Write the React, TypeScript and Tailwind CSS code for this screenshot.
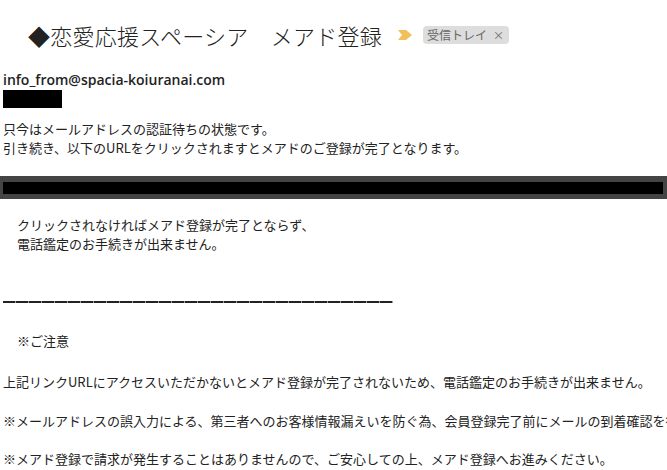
import * as React from "react";

// ─── Bits ──────────────────────────────────────────────────────────────────────

const JP = "font-['Noto_Sans_CJK_JP','Noto_Sans',sans-serif]";

function ImportantMarker() {
  return (
    <svg width="14" height="10" viewBox="0 0 14 10" className="shrink-0">
      <polygon points="0,0 8,0 14,5 8,10 0,10 4,5" fill="#f2c05a" />
    </svg>
  );
}

function InboxLabel() {
  return (
    <span
      className={`inline-flex h-[18px] items-center gap-[6px] rounded-[4px] bg-[#dddddd] pl-[4px] pr-[5px] text-[12px] leading-none text-[#666666] ${JP}`}
    >
      受信トレイ
      <span className="text-[11px] text-[#666666]">×</span>
    </span>
  );
}

function DashRule() {
  return (
    <div className="ml-[3px] h-[2px] w-[390px] bg-[repeating-linear-gradient(90deg,#222_0px,#222_12px,#9a9a9a_12px,#9a9a9a_13px)]" />
  );
}

// ─── App ───────────────────────────────────────────────────────────────────────

export default function App() {
  return (
    <div className="h-[470px] w-[667px] overflow-hidden whitespace-nowrap bg-white text-[#222222]">
      {/* Subject line */}
      <div className="flex h-[70px] items-center pl-[28px]">
        <h1 className={`text-[22px] font-light leading-none tracking-[0.25px] text-[#222222] ${JP}`}>
          ◆恋愛応援スペーシア　メアド登録
        </h1>
        <span className="ml-[16px] mr-[11px] flex">
          <ImportantMarker />
        </span>
        <InboxLabel />
      </div>

      {/* Sender */}
      <div className="pl-[3px] font-['Open_Sans','Roboto',sans-serif] text-[14px] font-semibold leading-[20px] text-[#222222]">
        info_from@spacia-koiuranai.com
      </div>
      <div className="ml-[3px] h-[18px] w-[59px] bg-black" />

      {/* Body */}
      <div className={`mt-[11px] pl-[3px] text-[13px] leading-[19px] ${JP}`}>
        <p>只今はメールアドレスの認証待ちの状態です。</p>
        <p>引き続き、以下のURLをクリックされますとメアドのご登録が完了となります。</p>
      </div>

      <div className="mt-[19px] flex h-[23px] items-center bg-[#444444] pl-[3px] pr-[4px]">
        <div className="h-[12px] flex-1 bg-black" />
      </div>

      <div className={`mt-[16px] pl-[17px] text-[13px] leading-[19px] ${JP}`}>
        <p>クリックされなければメアド登録が完了とならず、</p>
        <p>電話鑑定のお手続きが出来ません。</p>
      </div>

      <div className="mt-[48px]">
        <DashRule />
      </div>

      <div className={`text-[13px] leading-[19px] ${JP}`}>
        <p className="mt-[28px] pl-[17px]">※ご注意</p>
        <p className="mt-[22px] pl-[3px]">
          上記リンクURLにアクセスいただかないとメアド登録が完了されないため、電話鑑定のお手続きが出来ません。
        </p>
        <p className="mt-[20px] pl-[3px]">
          ※メールアドレスの誤入力による、第三者へのお客様情報漏えいを防ぐ為、会員登録完了前にメールの到着確認を行っております。
        </p>
        <p className="mt-[19px] pl-[3px]">
          ※メアド登録で請求が発生することはありませんので、ご安心しての上、メアド登録へお進みください。
        </p>
      </div>
    </div>
  );
}
